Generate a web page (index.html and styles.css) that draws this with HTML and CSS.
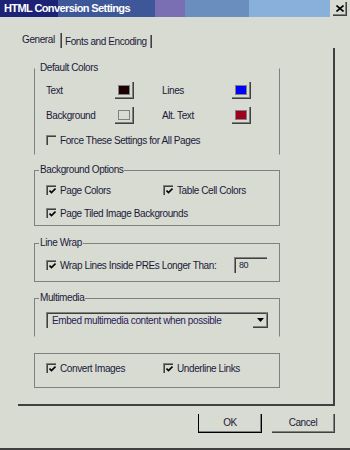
FILE: index.html
```html
<!DOCTYPE html>
<html lang="en">
<head>
    <meta charset="UTF-8">
    <title>HTML Conversion Settings</title>
    <link rel="stylesheet" href="styles.css">
</head>
<body>
    <div class="window">
        <!-- Barre de titre -->
        <div class="titlebar">
            <div class="caption">HTML Conversion Settings</div>
            <div class="close">
                <svg width="8" height="7" viewBox="0 0 8 7"><path d="M0.5 0.5 L7.5 6.5 M7.5 0.5 L0.5 6.5" stroke="#000" stroke-width="1.6"/></svg>
            </div>
        </div>

        <div class="tabs">
            <div class="tab tab-general">General</div>
            <div class="tab tab-fonts">Fonts and Encoding</div>
        </div>

        <div class="panel">
            <div class="group group-colors">
                <div class="group-title">Default Colors</div>
                <div class="color-grid">
                    <span>Text</span>
                    <span class="swatch"><i class="swatch-text"></i></span>
                    <span>Lines</span>
                    <span class="swatch"><i class="swatch-lines"></i></span>
                    <span>Background</span>
                    <span class="swatch"><i class="swatch-bg"></i></span>
                    <span>Alt. Text</span>
                    <span class="swatch"><i class="swatch-alt"></i></span>
                </div>
                <div class="check force"><span class="box"></span>Force These Settings for All Pages</div>
            </div>

            <div class="group group-bg">
                <div class="group-title">Background Options</div>
                <div class="check-grid">
                    <div class="check"><span class="box checked"><svg width="7" height="6" viewBox="0 0 7 6"><path d="M0.5 2.5 L2.5 4.6 L6.5 0.6" stroke="#000" stroke-width="1.6" fill="none"/></svg></span>Page Colors</div>
                    <div class="check"><span class="box checked"><svg width="7" height="6" viewBox="0 0 7 6"><path d="M0.5 2.5 L2.5 4.6 L6.5 0.6" stroke="#000" stroke-width="1.6" fill="none"/></svg></span>Table Cell Colors</div>
                </div>
                <div class="check tiled"><span class="box checked"><svg width="7" height="6" viewBox="0 0 7 6"><path d="M0.5 2.5 L2.5 4.6 L6.5 0.6" stroke="#000" stroke-width="1.6" fill="none"/></svg></span>Page Tiled Image Backgrounds</div>
            </div>

            <div class="group group-wrap">
                <div class="group-title">Line Wrap</div>
                <div class="wrap-row">
                    <div class="check"><span class="box checked"><svg width="7" height="6" viewBox="0 0 7 6"><path d="M0.5 2.5 L2.5 4.6 L6.5 0.6" stroke="#000" stroke-width="1.6" fill="none"/></svg></span>Wrap Lines Inside PREs Longer Than:</div>
                    <div class="num">80</div>
                </div>
            </div>

            <div class="group group-media">
                <div class="group-title">Multimedia</div>
                <div class="select">
                    <span class="select-text">Embed multimedia content when possible</span>
                    <span class="select-arrow">
                        <svg width="7" height="4" viewBox="0 0 7 4"><path d="M0 0 H7 L3.5 4 Z" fill="#000"/></svg>
                    </span>
                </div>
            </div>

            <div class="group group-misc">
                <div class="check-grid">
                    <div class="check"><span class="box checked"><svg width="7" height="6" viewBox="0 0 7 6"><path d="M0.5 2.5 L2.5 4.6 L6.5 0.6" stroke="#000" stroke-width="1.6" fill="none"/></svg></span>Convert Images</div>
                    <div class="check"><span class="box checked"><svg width="7" height="6" viewBox="0 0 7 6"><path d="M0.5 2.5 L2.5 4.6 L6.5 0.6" stroke="#000" stroke-width="1.6" fill="none"/></svg></span>Underline Links</div>
                </div>
            </div>
        </div>

        <div class="buttons">
            <div class="btn btn-ok">OK</div>
            <div class="btn btn-cancel">Cancel</div>
        </div>
    </div>
</body>
</html>
```

FILE: styles.css
```css
body {
    margin: 0;
    background-color: #d8dbd2;
    color: #1a1a3a;
    font-family: "Liberation Sans", Arial, sans-serif;
    font-size: 10px;
    letter-spacing: -0.4px;
    overflow: hidden;
}

.window {
    height: 448px;
    border-bottom: 2px solid #404040;
    overflow: hidden;
}

/* Barre de titre */
.titlebar {
    display: flex;
    height: 17px;
}

.caption {
    width: 330px;
    box-sizing: border-box;
    padding-left: 4px;
    line-height: 17px;
    font-size: 11px;
    font-weight: bold;
    letter-spacing: -0.6px;
    color: #ffffff;
    white-space: nowrap;
    background: linear-gradient(to right,
        #1c2274 0 58px,
        #3e5798 58px 155px,
        #7a6fb3 155px 185px,
        #6a8fbf 185px 249px,
        #89afdb 249px);
}

.close {
    width: 14px;
    height: 14px;
    box-sizing: border-box;
    margin: 2px 0 0 3px;
    border-right: 1px solid #404040;
    border-bottom: 1px solid #404040;
    box-shadow: inset -1px -1px #808080;
    display: flex;
    align-items: center;
    justify-content: center;
}

/* Onglets */
.tabs {
    display: flex;
    margin: 16px 0 0 18px;
    height: 15px;
}

.tab {
    box-sizing: border-box;
    line-height: 14px;
    white-space: nowrap;
    border-right: 1px solid #404040;
    box-shadow: inset -1px 0 #808080;
}

.tab-general {
    width: 44px;
    height: 15px;
    padding-left: 4px;
}

.tab-fonts {
    width: 90px;
    height: 13px;
    margin-top: 2px;
    padding-left: 3px;
    line-height: 13px;
}

/* Panneau principal */
.panel {
    width: 317px;
    margin-left: 18px;
    box-sizing: border-box;
    padding: 20px 0 16px 16px;
    border-right: 2px solid #404040;
    border-bottom: 2px solid #404040;
}

.group {
    width: 246px;
    box-sizing: border-box;
    border: 1px solid #808080;
    padding: 0 0 8px 11px;
}

.group-title {
    width: fit-content;
    margin: -7px 0 0 -7px;
    padding: 0 1px;
    line-height: 12px;
    white-space: nowrap;
    background-color: #d8dbd2;
}

.group-colors {
    border-top-color: transparent;
    border-bottom-color: transparent;
}

.group-bg {
    margin-top: 15px;
    padding-bottom: 6px;
}

.group-wrap {
    margin-top: 17px;
}

.group-media {
    margin-top: 16px;
    border-bottom-color: transparent;
}

.group-misc {
    margin-top: 16px;
    padding: 8px 0 13px 11px;
}

/* Couleurs */
.color-grid {
    display: grid;
    grid-template-columns: 69px 19px 28px 70px 19px;
    grid-template-rows: 17px 17px;
    row-gap: 8px;
    margin-top: 8px;
    align-items: center;
}

.color-grid > span:nth-child(3),
.color-grid > span:nth-child(7) {
    grid-column: 4;
}

.swatch {
    width: 19px;
    height: 17px;
    box-sizing: border-box;
    padding: 3px 0 0 3px;
    border-right: 1px solid #404040;
    border-bottom: 1px solid #404040;
    box-shadow: inset -1px -1px #808080;
}

.swatch i {
    display: block;
    width: 12px;
    height: 10px;
    box-sizing: border-box;
    border: 1px solid #808080;
}

.swatch-text { background-color: #1a0000; }
.swatch-lines { background-color: #0000ff; }
.swatch-bg { background-color: #d8dbd2; }
.swatch-alt { background-color: #a0001e; }

/* Cases à cocher */
.check {
    display: flex;
    align-items: center;
    gap: 4px;
    height: 12px;
    white-space: nowrap;
}

.box {
    width: 10px;
    height: 10px;
    flex-shrink: 0;
    box-sizing: border-box;
    border-top: 1px solid #808080;
    border-left: 1px solid #808080;
    box-shadow: inset 1px 1px #404040;
    display: flex;
    align-items: center;
    justify-content: center;
    padding: 1px 0 0 1px;
}

.force {
    margin-top: 10px;
}

.check-grid {
    display: grid;
    grid-template-columns: 117px auto;
    margin-top: 8px;
}

.group-misc .check-grid {
    margin-top: 0;
}

.tiled {
    margin-top: 11px;
}

/* Retour à la ligne */
.wrap-row {
    display: grid;
    grid-template-columns: 188px 33px;
    align-items: center;
    height: 16px;
    margin-top: 8px;
}

.num {
    height: 16px;
    box-sizing: border-box;
    padding-left: 4px;
    line-height: 15px;
    font-size: 9px;
    border-top: 1px solid #808080;
    border-left: 1px solid #808080;
    box-shadow: inset 1px 1px #404040;
}

/* Liste déroulante */
.select {
    display: flex;
    width: 222px;
    height: 16px;
    box-sizing: border-box;
    margin-top: 8px;
    border-top: 1px solid #808080;
    border-left: 1px solid #808080;
    box-shadow: inset 1px 1px #404040;
}

.select-text {
    flex: 1;
    padding-left: 5px;
    line-height: 15px;
    white-space: nowrap;
    color: #2a1a5a;
}

.select-arrow {
    width: 15px;
    height: 15px;
    box-sizing: border-box;
    border-right: 1px solid #404040;
    border-bottom: 1px solid #404040;
    box-shadow: inset -1px -1px #808080;
    display: flex;
    align-items: center;
    justify-content: center;
}

/* Boutons */
.buttons {
    display: flex;
    justify-content: flex-end;
    gap: 10px;
    margin-top: 8px;
    padding-right: 15px;
}

.btn {
    height: 19px;
    box-sizing: border-box;
    line-height: 18px;
    text-align: center;
    border-right: 1px solid #404040;
    border-bottom: 1px solid #404040;
    box-shadow: inset -1px -1px #808080;
}

.btn-ok {
    width: 64px;
    border-left: 1px solid #000000;
    border-right-color: #000000;
    border-bottom-color: #000000;
}

.btn-cancel {
    width: 63px;
}
```
